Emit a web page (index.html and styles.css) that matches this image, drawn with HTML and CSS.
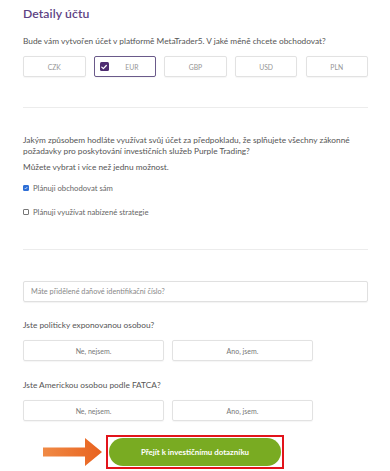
FILE: index.html
```html
<!DOCTYPE html>
<html lang="cs">
<head>
<meta charset="utf-8">
<link rel="stylesheet" href="styles.css">
</head>
<body>
<div class="page">
  <h1 class="title">Detaily účtu</h1>
  <p class="q q1">Bude vám vytvořen účet v platformě MetaTrader5. V jaké měně chcete obchodovat?</p>
  <div class="currencies">
    <div class="cur">CZK</div>
    <div class="cur selected"><span class="pbox"><svg viewBox="0 0 10 10" width="8" height="8"><path d="M2.2 5.2 L4.2 7.1 L7.9 3.1" fill="none" stroke="#fff" stroke-width="1.5" stroke-linecap="round" stroke-linejoin="round"/></svg></span>EUR</div>
    <div class="cur">GBP</div>
    <div class="cur">USD</div>
    <div class="cur">PLN</div>
  </div>
  <div class="rule rule1"></div>
  <p class="q q2">Jakým způsobem hodláte využívat svůj účet za předpokladu, že splňujete všechny zákonné požadavky pro poskytování investičních služeb Purple Trading?</p>
  <p class="q q3">Můžete vybrat i více než jednu možnost.</p>
  <div class="opt opt1"><span class="cb checked"><svg viewBox="0 0 10 10" width="6" height="6"><path d="M1.8 5.2 L4 7.4 L8.2 2.6" fill="none" stroke="#fff" stroke-width="1.8"/></svg></span>Plánuji obchodovat sám</div>
  <div class="opt opt2"><span class="cb"></span>Plánuji využívat nabízené strategie</div>
  <div class="rule rule2"></div>
  <div class="input">Máte přidělené daňové identifikační číslo?</div>
  <p class="q q4">Jste politicky exponovanou osobou?</p>
  <div class="yn">
    <div class="ynb">Ne, nejsem.</div>
    <div class="ynb">Ano, jsem.</div>
  </div>
  <p class="q q5">Jste Americkou osobou podle FATCA?</p>
  <div class="yn">
    <div class="ynb">Ne, nejsem.</div>
    <div class="ynb">Ano, jsem.</div>
  </div>
  <div class="cta-row">
    <svg class="arrow" viewBox="0 0 60 28" width="60" height="28"><defs><linearGradient id="ag" x1="0" x2="1" y1="0" y2="0"><stop offset="0" stop-color="#f08a45"/><stop offset="1" stop-color="#e8621f"/></linearGradient></defs><path d="M0 9.5 H42 V0 L59 14 L42 28 V18.5 H0 Z" fill="url(#ag)"/></svg>
    <div class="cta-frame"><div class="cta">Přejít k investičnímu dotazníku</div></div>
  </div>
</div>
</body>
</html>
```

FILE: styles.css
```css
* { box-sizing: border-box; }
html, body { margin: 0; padding: 0; background: #fff; }
body { font-family: "Lato", "Open Sans", sans-serif; color: #5a5a5a; }
.page { width: 390px; height: 471px; padding: 0 22px 0 23px; overflow: hidden; }
.title { margin: 0; padding-top: 6px; font-size: 12.2px; line-height: 16px; font-weight: 600; color: #5d4283; letter-spacing: 0.1px; }
.q { margin: 0; font-size: 8.3px; line-height: 11px; color: #555; }
.q1 { margin-top: 14px; }
.currencies { display: flex; justify-content: space-between; margin-top: 9px; }
.cur { flex: 0 0 62.5px; height: 21px; border: 1px solid #e2e2e2; border-radius: 2px; display: flex; align-items: center; justify-content: center; font-size: 6.8px; color: #959595; position: relative; box-shadow: 0 0.5px 1px rgba(0,0,0,0.04); }
.cur.selected { border-color: #6a5a8a; padding-left: 14px; }
.pbox { position: absolute; left: 5px; top: 5px; width: 9px; height: 9px; border-radius: 1.5px; background: #4d2b70; display: flex; align-items: center; justify-content: center; }
.rule { height: 1px; background: #ececec; }
.rule1 { margin-top: 30px; }
.q2 { margin-top: 27px; }
.q3 { margin-top: 5px; }
.opt { display: flex; align-items: center; font-size: 7.7px; color: #666; height: 8px; }
.opt1 { margin-top: 11px; }
.opt2 { margin-top: 16px; }
.cb { width: 6px; height: 6px; border: 0.8px solid #777; border-radius: 1px; margin-right: 4px; display: flex; align-items: center; justify-content: center; }
.cb.checked { background: #2f6fd6; border-color: #2f6fd6; }
.rule2 { margin-top: 33px; }
.input { margin-top: 31px; height: 21px; border: 1px solid #e0e0e0; border-radius: 2px; display: flex; align-items: center; padding-left: 7px; font-size: 7.3px; color: #888; box-shadow: 0 0.5px 1px rgba(0,0,0,0.05); }
.q4 { margin-top: 18px; }
.q5 { margin-top: 19px; }
.yn { display: flex; gap: 8px; margin-top: 9px; }
.ynb { width: 141px; height: 21px; border: 1px solid #e2e2e2; border-radius: 2px; display: flex; align-items: center; justify-content: center; font-size: 7px; color: #777; box-shadow: 0 0.5px 1px rgba(0,0,0,0.04); }
.cta-row { display: flex; align-items: center; margin-top: 14px; margin-left: 20px; }
.arrow { display: block; margin-right: 3px; }
.cta-frame { width: 178px; height: 34px; border: 2px solid #e2141b; padding: 1px 1px; }
.cta { height: 100%; border-radius: 14px; background: #79ab22; color: #fff; font-weight: 700; font-size: 7.9px; display: flex; align-items: center; justify-content: center; }
```
